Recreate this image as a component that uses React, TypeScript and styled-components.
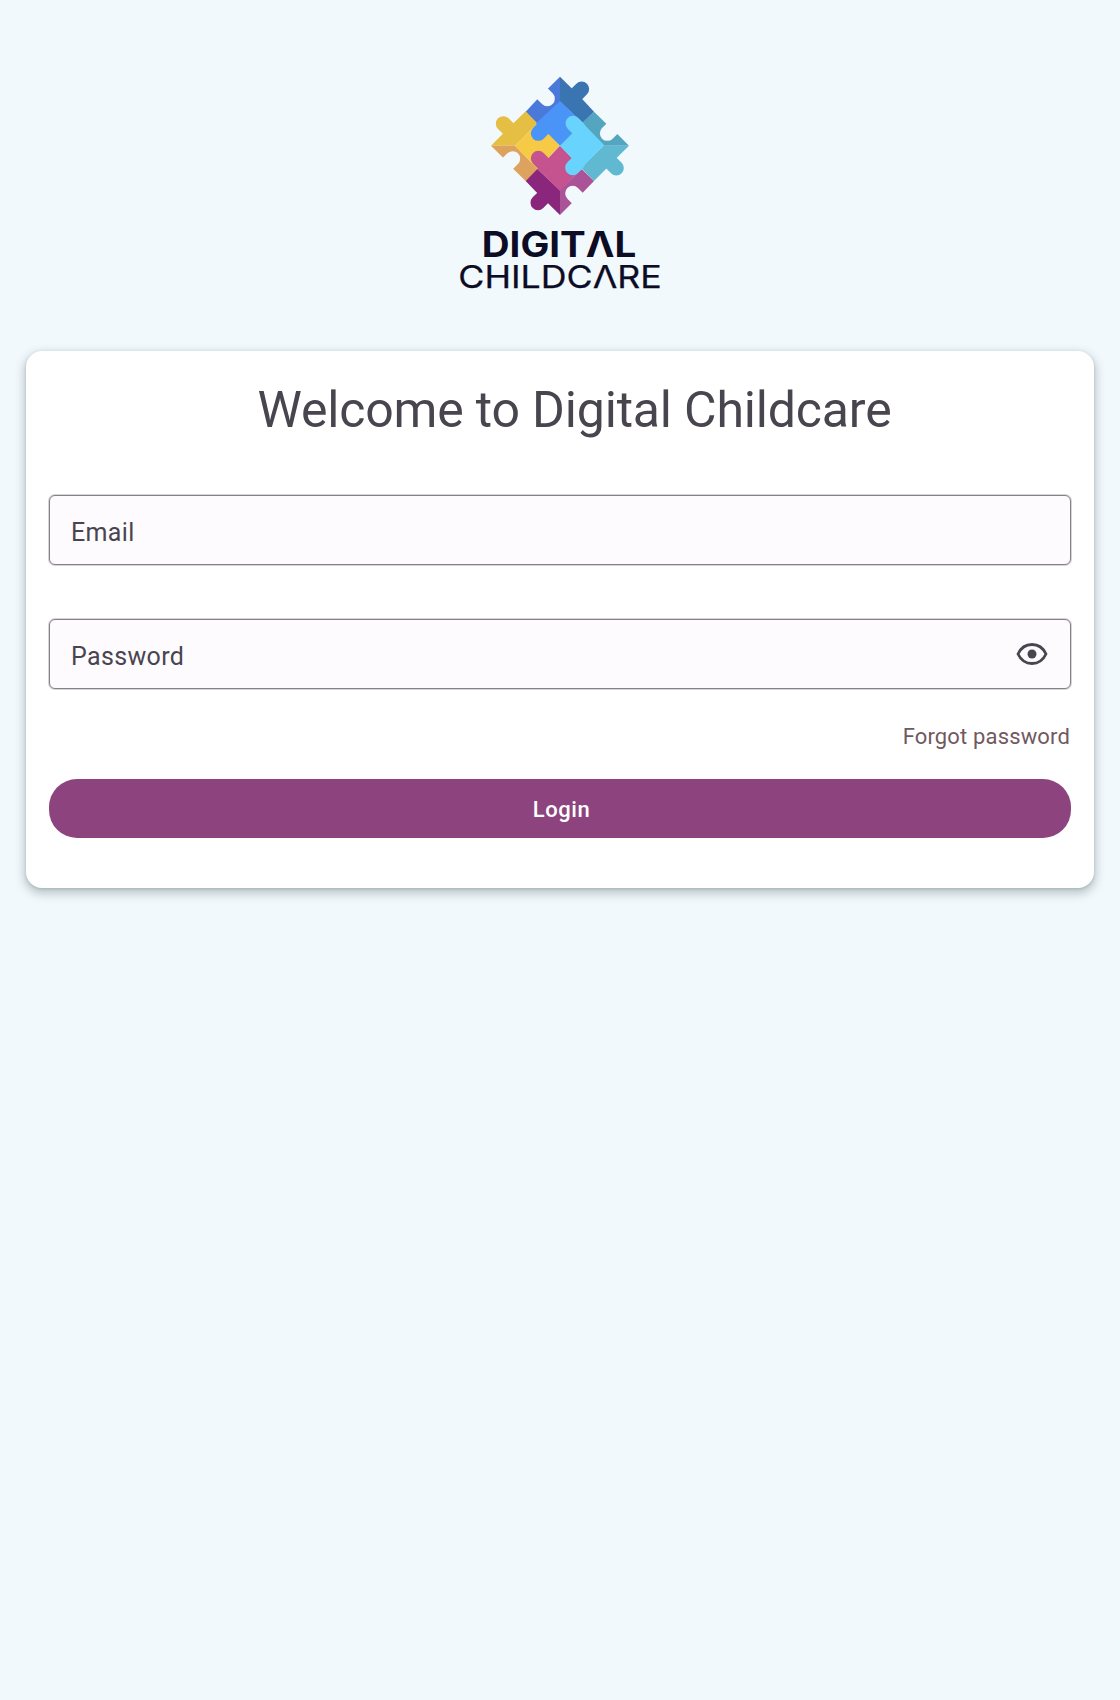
import React, { useState } from "react";
import styled, { createGlobalStyle } from "styled-components";

const GlobalStyle = createGlobalStyle`
  * { box-sizing: border-box; }
  body {
    margin: 0;
    background: #f2f9fd;
    font-family: Roboto, "Liberation Sans", sans-serif;
    color: #49454f;
  }
`;

const Page = styled.main`
  min-height: 1700px;
  padding: 65px 26px 0;
  display: flex;
  flex-direction: column;
  align-items: center;
  background: #f2f9fd;
`;

const Logo = styled.svg`
  display: block;
  width: 220px;
  height: 230px;
  flex: none;
`;

const Card = styled.form`
  width: 100%;
  height: 537px;
  margin-top: 56px;
  padding: 30px 23px 0;
  display: flex;
  flex-direction: column;
  background: #fff;
  border-radius: 16px;
  box-shadow: 0 4px 10px 2px rgba(40, 60, 65, 0.26), 0 1px 3px rgba(40, 60, 65, 0.18);
`;

const Title = styled.h1`
  margin: 0 0 55px;
  padding-left: 29px;
  font-size: 50px;
  line-height: 59px;
  font-weight: 400;
  letter-spacing: -0.17px;
  text-align: center;
  white-space: nowrap;
`;

const Field = styled.label`
  height: 70px;
  margin-bottom: 54px;
  padding: 6px 22px 0 21px;
  display: flex;
  align-items: center;
  justify-content: space-between;
  border: 1px solid #85808a;
  border-radius: 6px;
  background: #fefbff;
  box-shadow: 0 0 0 1px rgba(121, 116, 126, 0.3);
`;

const Input = styled.input`
  flex: 1;
  min-width: 0;
  padding: 0;
  border: 0;
  outline: 0;
  background: transparent;
  font: 400 25px/30px Roboto, sans-serif;
  letter-spacing: 0.35px;
  color: #49454f;
  &::placeholder { color: #49454f; opacity: 1; }
`;

const IconButton = styled.button`
  padding: 0;
  border: 0;
  background: none;
  color: #49454f;
  display: flex;
  margin: 0 0 7px;
`;

const Forgot = styled.a`
  align-self: flex-end;
  margin: -20px 1px 0 0;
  font-size: 22px;
  line-height: 28px;
  letter-spacing: 0.15px;
  color: #715960;
`;

const LoginButton = styled.button`
  height: 59px;
  margin-top: 28px;
  padding: 3px 0 0 3px;
  border: 0;
  border-radius: 28px;
  background: #8d437d;
  color: #fff;
  font: 500 22px/28px Roboto, sans-serif;
  letter-spacing: 0.55px;
`;

function PuzzleLogo() {
  const gap = "#f2f9fd";
  return (
    <Logo viewBox="450 65 220 230" role="img" aria-label="Digital Childcare">
      <g transform="translate(480 65) scale(.33333)" strokeWidth="45" strokeLinecap="round">
        <path fill="#4b79da" d="M240 35V112L170 180L137 140L172 103L205 70Z" />
        <path fill="#3a75b2" d="M240 35L275 70L310 106L342 140L308 174L240 110Z" />
        <path d="M305 72L292 85" stroke="#3a75b2" />
        <path d="M202 101L186 85" stroke={gap} />
        <path fill="#54a5bf" d="M342 140L379 176L412 207L447 242H370L306 173Z" />
        <path d="M382 205L397 190" stroke={gap} />
        <path fill="#60b9d1" d="M370 242H447L412 277L378 312L342 348L303 308Z" />
        <path d="M409 309L394 294" stroke="#60b9d1" />
        <path fill="#e4bf43" d="M33 242L68 207L103 172L137 139L172 175L105 242Z" />
        <path d="M70 176L86 192" stroke="#e4bf43" />
        <path fill="#dda25d" d="M33 242H105L174 313L137 348L100 312L68 277Z" />
        <path d="M98 281L83 296" stroke={gap} />
        <path fill="#f7ca45" d="M105 242L172 175L208 208L240 242L205 278L172 312Z" />
        <path fill="#aa5398" d="M305 312L342 348L308 383L275 415L240 450V376Z" />
        <path d="M278 385L293 400" stroke={gap} />
        <path fill="#8a267b" d="M172 312L240 376V450L204 415L168 380L137 348Z" />
        <path d="M174 413L188 399" stroke="#8a267b" />
        <path fill="#4a94f7" d="M240 108L308 174L330 208L240 242L206 208L168 175Z" />
        <path d="M175 205L192 188" stroke="#4a94f7" />
        <path fill="#c4538f" d="M240 242L275 278L306 310L240 378L172 312L208 276Z" />
        <path d="M175 280L192 297" stroke="#c4538f" />
        <path fill="#68d3fc" d="M306 172L372 240L304 310L272 276L240 242L274 208Z" />
        <path d="M279 175L295 191" stroke="#68d3fc" />
        <path d="M278 308L294 292" stroke="#68d3fc" />
      </g>
      <g fill="#0c0c24" fontFamily="Inter, sans-serif">
        <text x="481.8" y="257" fontSize="34.8" fontWeight="700" textLength="154.500" lengthAdjust="spacingAndGlyphs">DIGITΛL</text>
        <text x="458.3" y="288" fontSize="31.5" fontWeight="400" stroke="#0c0c24" strokeWidth=".25" textLength="203.500" lengthAdjust="spacingAndGlyphs">CHILDCΛRE</text>
      </g>
    </Logo>
  );
}

function EyeIcon() {
  return (
    <svg width="32" height="24" viewBox="0 0 32 24" fill="none">
      <path d="M2 12C4.8 6 10 2.5 16 2.5S27.200 6 30 12C27.200 18 22 21.500 16 21.500S4.800 18 2 12Z" stroke="currentColor" strokeWidth="2.8" strokeLinejoin="round" />
      <circle cx="16" cy="12" r="4.500" fill="currentColor" />
    </svg>
  );
}

export default function App() {
  const [visible, setVisible] = useState(false);
  return (
    <>
      <GlobalStyle />
      <Page>
        <PuzzleLogo />
        <Card onSubmit={(e) => e.preventDefault()}>
          <Title>Welcome to Digital Childcare</Title>
          <Field><Input type="email" placeholder="Email" /></Field>
          <Field>
            <Input type={visible ? "text" : "password"} placeholder="Password" />
            <IconButton type="button" aria-label="Show password" onClick={() => setVisible(!visible)}>
              <EyeIcon />
            </IconButton>
          </Field>
          <Forgot>Forgot password</Forgot>
          <LoginButton type="submit">Login</LoginButton>
        </Card>
      </Page>
    </>
  );
}
